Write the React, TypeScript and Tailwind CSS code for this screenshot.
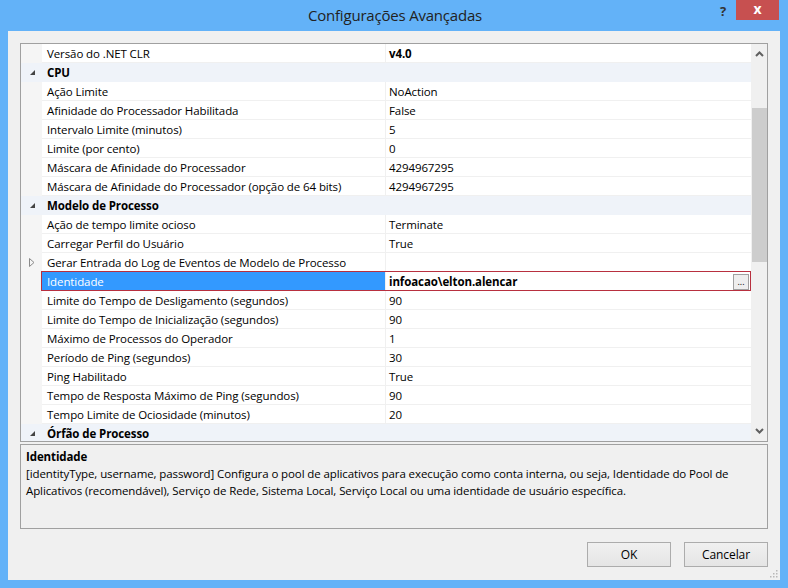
import React from "react";

type Row =
  | { kind: "cat"; label: string }
  | { kind: "prop"; label: string; value: string; bold?: boolean; collapsed?: boolean; selected?: boolean };

const rows: Row[] = [
  { kind: "prop", label: "Versão do .NET CLR", value: "v4.0", bold: true },
  { kind: "cat", label: "CPU" },
  { kind: "prop", label: "Ação Limite", value: "NoAction" },
  { kind: "prop", label: "Afinidade do Processador Habilitada", value: "False" },
  { kind: "prop", label: "Intervalo Limite (minutos)", value: "5" },
  { kind: "prop", label: "Limite (por cento)", value: "0" },
  { kind: "prop", label: "Máscara de Afinidade do Processador", value: "4294967295" },
  { kind: "prop", label: "Máscara de Afinidade do Processador (opção de 64 bits)", value: "4294967295" },
  { kind: "cat", label: "Modelo de Processo" },
  { kind: "prop", label: "Ação de tempo limite ocioso", value: "Terminate" },
  { kind: "prop", label: "Carregar Perfil do Usuário", value: "True" },
  { kind: "prop", label: "Gerar Entrada do Log de Eventos de Modelo de Processo", value: "", collapsed: true },
  { kind: "prop", label: "Identidade", value: "infoacao\\elton.alencar", bold: true, selected: true },
  { kind: "prop", label: "Limite do Tempo de Desligamento (segundos)", value: "90" },
  { kind: "prop", label: "Limite do Tempo de Inicialização (segundos)", value: "90" },
  { kind: "prop", label: "Máximo de Processos do Operador", value: "1" },
  { kind: "prop", label: "Período de Ping (segundos)", value: "30" },
  { kind: "prop", label: "Ping Habilitado", value: "True" },
  { kind: "prop", label: "Tempo de Resposta Máximo de Ping (segundos)", value: "90" },
  { kind: "prop", label: "Tempo Limite de Ociosidade (minutos)", value: "20" },
  { kind: "cat", label: "Órfão de Processo" },
];

const ExpandedGlyph = () => (
  <svg width="7" height="7" viewBox="0 0 7 7">
    <polygon points="6,1 6,6 1,6" fill="#444" />
  </svg>
);

const CollapsedGlyph = () => (
  <svg width="7" height="9" viewBox="0 0 7 9">
    <polygon points="1.5,0.5 6,4.5 1.5,8.5" fill="none" stroke="#8a8a8a" strokeWidth="1" />
  </svg>
);

function GridRow({ row }: { row: Row }) {
  if (row.kind === "cat") {
    return (
      <div className="flex h-[19px] shrink-0 bg-[#eff3f9]">
        <div className="w-[21px] flex items-center justify-center pl-[2px]">
          <ExpandedGlyph />
        </div>
        <div className="flex-1 pl-[5px] pt-[1px] flex items-center font-bold text-black">{row.label}</div>
      </div>
    );
  }
  return (
    <div className="relative flex h-[19px] shrink-0">
      <div className="w-[21px] bg-[#f5f5f5] flex items-center justify-center">
        {row.collapsed ? <CollapsedGlyph /> : null}
      </div>
      <div
        className={
          row.selected
            ? "w-[343px] pl-[5px] pt-[1px] flex items-center bg-[#3399ff] text-white"
            : "w-[343px] pl-[5px] pt-[1px] flex items-center bg-white text-black border-b border-[#f0f0f0]"
        }
      >
        <span className="whitespace-nowrap">{row.label}</span>
      </div>
      <div className="w-px bg-[#f0f0f0]" />
      <div
        className={
          "flex-1 pl-[3px] pt-[1px] flex items-center bg-white text-black " +
          (row.selected ? "" : "border-b border-[#f0f0f0]")
        }
      >
        <span className={row.bold ? "font-bold whitespace-nowrap" : "whitespace-nowrap"}>{row.value}</span>
        {row.selected ? (
          <div className="ml-auto mr-[2px] w-[16px] h-[16px] border border-[#a0a0a0] bg-[#eeeeee] flex items-end justify-center pb-[3px] text-[9px] leading-none text-black tracking-normal">
            ...
          </div>
        ) : null}
      </div>
      {row.selected ? (
        <div className="absolute left-[20px] right-0 top-[-1px] bottom-0 border border-[#b8303f] pointer-events-none" />
      ) : null}
    </div>
  );
}

export default function App() {
  return (
    <div
      className="w-[788px] h-[588px] bg-[#63b2f8] flex flex-col text-[11.5px] tracking-[-0.1px] leading-none overflow-hidden"
      style={{ fontFamily: '"Open Sans", "Noto Sans", sans-serif' }}
    >
      {/* Title bar */}
      <div className="h-[31px] shrink-0 flex items-start">
        <div className="w-[710px] pl-[80px] h-[31px] flex items-center justify-center text-[15px] tracking-[-0.2px] text-[#222]">
          Configurações Avançadas
        </div>
        <div className="w-[26px] h-[22px] flex items-center justify-center text-[13px] font-bold text-[#333]">?</div>
        <div className="w-[43px] h-[20px] bg-[#c75050] flex items-center justify-center text-white text-[14px] font-bold pb-[2px]">
          x
        </div>
      </div>

      {/* Client area */}
      <div className="mx-[8px] mb-[8px] flex-1 bg-[#f0f0f0] pt-[12px] px-[12px] flex flex-col relative">
        {/* Property grid */}
        <div className="h-[399px] border border-[#a0a0a0] flex bg-white">
          <div className="w-[730px] flex flex-col overflow-hidden">
            {rows.map((r, i) => (
              <GridRow key={i} row={r} />
            ))}
          </div>
          <div className="flex-1 bg-[#f0f0f0] flex flex-col items-center">
            <div className="h-[20px] w-full flex items-center justify-center">
              <svg width="9" height="6" viewBox="0 0 9 6">
                <polyline points="1,5 4.5,1.5 8,5" fill="none" stroke="#606060" strokeWidth="2" />
              </svg>
            </div>
            <div className="mt-[44px] w-[15px] h-[154px] bg-[#cdcdcd]" />
            <div className="flex-1" />
            <div className="h-[20px] w-full flex items-center justify-center">
              <svg width="9" height="6" viewBox="0 0 9 6">
                <polyline points="1,1 4.5,4.5 8,1" fill="none" stroke="#606060" strokeWidth="2" />
              </svg>
            </div>
          </div>
        </div>

        {/* Description panel */}
        <div className="mt-[2px] h-[85px] border border-[#a0a0a0] bg-[#f0f0f0] px-[5px] pt-[3px] text-black">
          <div className="font-bold h-[17px] flex items-center">Identidade</div>
          <div className="leading-[17px]">
            [identityType, username, password] Configura o pool de aplicativos para execução como conta interna, ou seja, Identidade do Pool de Aplicativos (recomendável), Serviço de Rede, Sistema Local, Serviço Local ou uma identidade de usuário específica.
          </div>
        </div>

        {/* Buttons */}
        <div className="mt-[13px] flex justify-end gap-[13px]">
          <button className="w-[84px] h-[25px] border border-[#acacac] bg-gradient-to-b from-[#f0f0f0] to-[#e5e5e5] text-black text-[12px]">
            OK
          </button>
          <button className="w-[84px] h-[25px] border border-[#acacac] bg-gradient-to-b from-[#f0f0f0] to-[#e5e5e5] text-black text-[12px]">
            Cancelar
          </button>
        </div>

        {/* Resize grip */}
        <svg className="absolute right-[2px] bottom-[2px]" width="10" height="10" viewBox="0 0 10 10">
          {[
            [8, 2], [8, 5], [5, 5], [8, 8], [5, 8], [2, 8],
          ].map(([x, y], i) => (
            <rect key={i} x={x} y={y} width="1.5" height="1.5" fill="#b8b8b8" />
          ))}
        </svg>
      </div>
    </div>
  );
}
